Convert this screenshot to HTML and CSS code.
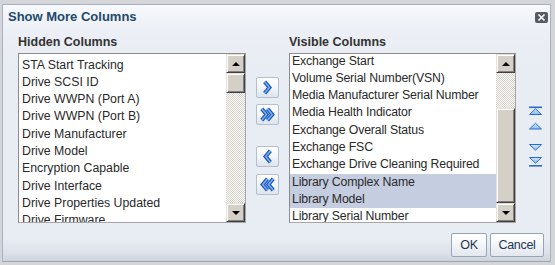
FILE: index.html
```html
<!DOCTYPE html>
<html>
<head>
<meta charset="utf-8">
<link rel="stylesheet" href="styles.css">
</head>
<body>
<div class="page">
  <div class="dialog">
    <div class="titlebar">
      <span class="title">Show More Columns</span>
      <span class="close">
        <svg width="13" height="11" viewBox="0 0 13 11"><rect x="0" y="0" width="13" height="11" rx="2" fill="#565c66"/><path d="M3.5 2.5 L9.5 8.5 M9.5 2.5 L3.5 8.5" stroke="#ffffff" stroke-width="1.6"/></svg>
      </span>
    </div>
    <div class="content">
      <div class="col">
        <div class="hdr">Hidden Columns</div>
        <div class="listbox">
          <div class="items">
            <div class="item">STA Start Tracking</div>
            <div class="item">Drive SCSI ID</div>
            <div class="item">Drive WWPN (Port A)</div>
            <div class="item">Drive WWPN (Port B)</div>
            <div class="item">Drive Manufacturer</div>
            <div class="item">Drive Model</div>
            <div class="item">Encryption Capable</div>
            <div class="item">Drive Interface</div>
            <div class="item">Drive Properties Updated</div>
            <div class="item">Drive Firmware</div>
          </div>
          <div class="sb">
            <div class="sbbtn"><span class="arr-up"></span></div>
            <div class="thumb left-thumb"></div>
            <div class="track"></div>
            <div class="sbbtn"><span class="arr-down"></span></div>
          </div>
        </div>
      </div>
      <div class="moves">
        <div class="mbtn b1"><svg width="22" height="21" viewBox="0 0 22 21"><path d="M8 4.5 L13 10.5 L8 16.5" fill="none" stroke="#1c55b8" stroke-width="4.2"/><path d="M8 4.5 L13 10.5 L8 16.5" fill="none" stroke="#78b1f2" stroke-width="1.6"/></svg></div>
        <div class="mbtn b2"><svg width="22" height="21" viewBox="0 0 22 21"><path d="M5 4.5 L10 10.5 L5 16.5 M11 4.5 L16 10.5 L11 16.5" fill="none" stroke="#1c55b8" stroke-width="4.2"/><path d="M5 4.5 L10 10.5 L5 16.5 M11 4.5 L16 10.5 L11 16.5" fill="none" stroke="#78b1f2" stroke-width="1.6"/></svg></div>
        <div class="mbtn b3"><svg width="22" height="21" viewBox="0 0 22 21"><path d="M14 4.5 L9 10.5 L14 16.5" fill="none" stroke="#1c55b8" stroke-width="4.2"/><path d="M14 4.5 L9 10.5 L14 16.5" fill="none" stroke="#78b1f2" stroke-width="1.6"/></svg></div>
        <div class="mbtn b4"><svg width="22" height="21" viewBox="0 0 22 21"><path d="M11 4.5 L6 10.5 L11 16.5 M17 4.5 L12 10.5 L17 16.5" fill="none" stroke="#1c55b8" stroke-width="4.2"/><path d="M11 4.5 L6 10.5 L11 16.5 M17 4.5 L12 10.5 L17 16.5" fill="none" stroke="#78b1f2" stroke-width="1.6"/></svg></div>
      </div>
      <div class="col right">
        <div class="hdr">Visible Columns</div>
        <div class="listbox">
          <div class="items">
            <div class="scroller">
              <div class="item">Exchange Start</div>
              <div class="item">Volume Serial Number(VSN)</div>
              <div class="item">Media Manufacturer Serial Number</div>
              <div class="item">Media Health Indicator</div>
              <div class="item">Exchange Overall Status</div>
              <div class="item">Exchange FSC</div>
              <div class="item">Exchange Drive Cleaning Required</div>
              <div class="item sel">Library Complex Name</div>
              <div class="item sel">Library Model</div>
              <div class="item">Library Serial Number</div>
            </div>
          </div>
          <div class="sb">
            <div class="sbbtn"><span class="arr-up"></span></div>
            <div class="track right-track"></div>
            <div class="thumb right-thumb"></div>
            <div class="sbbtn"><span class="arr-down"></span></div>
          </div>
        </div>
      </div>
      <div class="order">
        <svg width="15" height="62" viewBox="0 0 15 62">
          <defs>
            <linearGradient id="tf" x1="0" y1="0" x2="0" y2="1"><stop offset="0" stop-color="#d6e7fb"/><stop offset="1" stop-color="#8fbaf0"/></linearGradient>
          </defs>
          <rect x="1" y="0.5" width="13" height="1.6" fill="#2a6bd1"/>
          <path d="M7.5 2.8 L13.5 8.5 L1.5 8.5 Z" fill="url(#tf)" stroke="#2a6bd1" stroke-width="1"/>
          <path d="M7.5 17.3 L13.5 23 L1.5 23 Z" fill="url(#tf)" stroke="#2a6bd1" stroke-width="1"/>
          <path d="M1.5 38.5 L13.5 38.5 L7.5 44.2 Z" fill="url(#tf)" stroke="#2a6bd1" stroke-width="1"/>
          <path d="M1.5 51.5 L13.5 51.5 L7.5 57.2 Z" fill="url(#tf)" stroke="#2a6bd1" stroke-width="1"/>
          <rect x="1" y="59" width="13" height="1.6" fill="#2a6bd1"/>
        </svg>
      </div>
    </div>
    <div class="footer">
      <button class="fbtn ok">OK</button>
      <button class="fbtn cancel">Cancel</button>
    </div>
  </div>
</div>
</body>
</html>
```

FILE: styles.css
```css
html, body {
  margin: 0;
  padding: 0;
}
body {
  width: 555px;
  height: 265px;
  overflow: hidden;
  background: #d3d5d8;
  font-family: "Liberation Sans", Arial, sans-serif;
}
.page {
  padding: 4px 0 0 2px;
}
.dialog {
  box-sizing: border-box;
  width: 549px;
  height: 258px;
  border: 1px solid #a9b1bc;
  border-bottom-color: #9ea5af;
  background: linear-gradient(to bottom, #f6f8fb 0, #eceff5 26px, #e8ecf3 60px, #e8ecf3 234px, #dde2ea 248px, #cdd3dc 256px);
  display: flex;
  flex-direction: column;
}
.titlebar {
  height: 25px;
  box-sizing: border-box;
  padding: 3px 2px 0 5px;
  display: flex;
  justify-content: space-between;
  align-items: flex-start;
}
.title {
  font-size: 13px;
  line-height: 17px;
  font-weight: bold;
  color: #22496b;
}
.close {
  margin-top: 4px;
  display: block;
  height: 11px;
}
.close svg { display: block; }
.content {
  display: flex;
  padding: 5px 0 0 15px;
}
.col {
  width: 228px;
  display: flex;
  flex-direction: column;
}
.col.right {
  width: 227px;
  margin-left: 10px;
}
.hdr {
  font-size: 12.5px;
  line-height: 15px;
  font-weight: bold;
  color: #333333;
  margin-bottom: 3px;
}
.listbox {
  box-sizing: border-box;
  height: 170px;
  border: 1px solid #a5a5a5;
  border-top-color: #8c8c8c;
  border-left-color: #8c8c8c;
  background: #ffffff;
  display: flex;
}
.items {
  flex: 1;
  overflow: hidden;
  padding-top: 2.5px;
  font-size: 12.3px;
  line-height: 17.3px;
  color: #2a2a2a;
}
.right .items {
  padding-top: 1px;
}
.item {
  padding-left: 3px;
  white-space: nowrap;
}
.right .item {
  padding-left: 2px;
  letter-spacing: -0.15px;
}
.scroller {
  margin-top: -2.5px;
}
.item.sel {
  background: #c5cde0;
}
.sb {
  width: 19px;
  display: flex;
  flex-direction: column;
}
.sbbtn {
  box-sizing: border-box;
  height: 19px;
  background: #d4d0c8;
  border: 1px solid;
  border-color: #e4e1da #404040 #404040 #e4e1da;
  box-shadow: inset 1px 1px #ffffff, inset -1px -1px #808080;
  display: flex;
  align-items: center;
  justify-content: center;
}
.arr-up {
  width: 0;
  height: 0;
  border-left: 4px solid transparent;
  border-right: 4px solid transparent;
  border-bottom: 4px solid #000000;
}
.arr-down {
  width: 0;
  height: 0;
  border-left: 4px solid transparent;
  border-right: 4px solid transparent;
  border-top: 4px solid #000000;
}
.thumb {
  box-sizing: border-box;
  background: #d4d0c8;
  border: 1px solid;
  border-color: #e4e1da #404040 #404040 #e4e1da;
  box-shadow: inset 1px 1px #ffffff, inset -1px -1px #808080;
}
.left-thumb { height: 20px; }
.right-thumb { height: 95px; }
.track {
  flex: 1;
  background: repeating-conic-gradient(#d4d0c8 0 25%, #ffffff 0 50%) 0 0 / 2px 2px;
}
.right-track { flex: 0 0 35px; }
.moves {
  width: 23px;
  margin-left: 10px;
  padding-top: 42px;
  display: flex;
  flex-direction: column;
}
.mbtn {
  box-sizing: border-box;
  width: 23px;
  height: 21px;
  border: 1px solid #b4bfcd;
  border-radius: 2px;
  background: linear-gradient(to bottom, #ffffff 0, #f3f6fa 50%, #dde4ee 100%);
  display: flex;
  align-items: center;
  justify-content: center;
}
.mbtn svg { display: block; }
.b2 { margin-top: 6px; }
.b3 { margin-top: 21px; }
.b4 { margin-top: 7px; }
.order {
  margin-left: 12px;
  padding-top: 71px;
}
.order svg { display: block; }
.footer {
  display: flex;
  justify-content: flex-end;
  padding: 10px 6px 0 0;
  gap: 3px;
}
.fbtn {
  box-sizing: border-box;
  height: 24px;
  margin: 0;
  padding: 0;
  font-family: "Liberation Sans", Arial, sans-serif;
  font-size: 12.5px;
  letter-spacing: -0.3px;
  color: #1e3554;
  border: 1px solid #98a3b3;
  border-radius: 2px;
  background: linear-gradient(to bottom, #ffffff 0, #f4f6f9 45%, #e2e7ee 100%);
}
.ok { width: 36px; }
.cancel { width: 54px; }
```
